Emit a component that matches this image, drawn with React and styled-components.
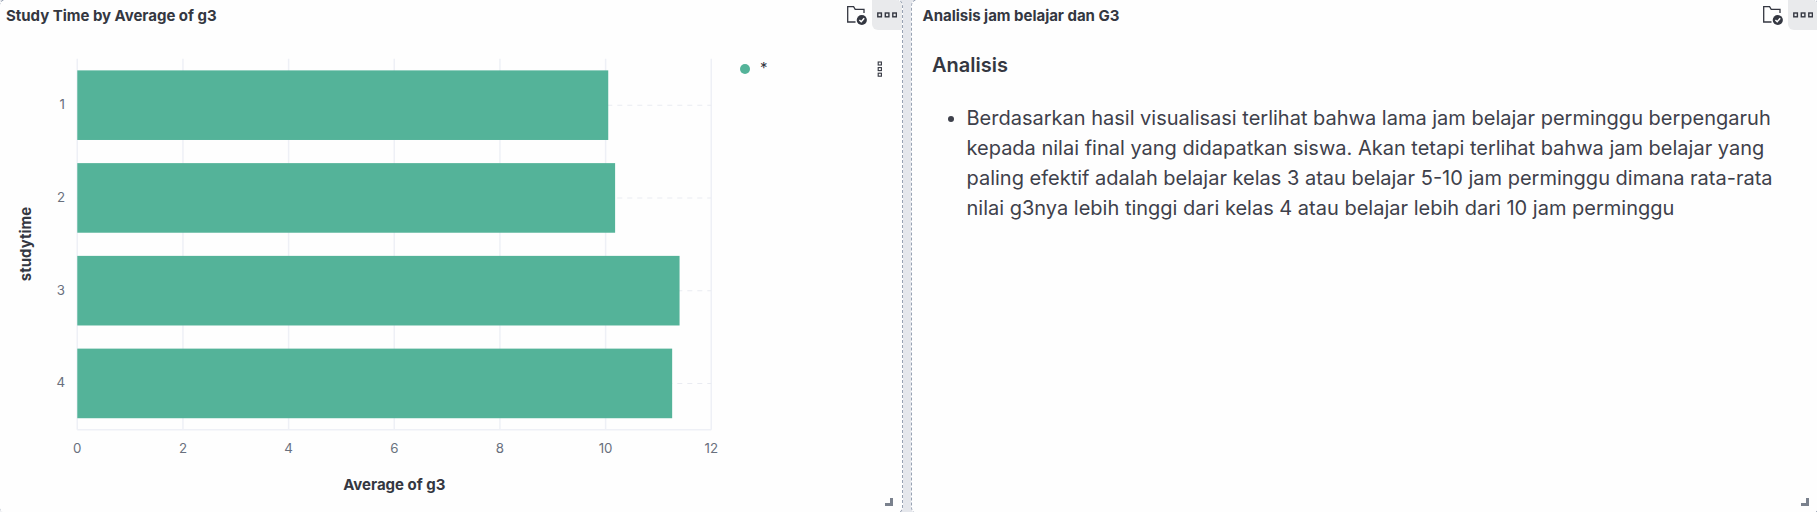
import React from "react";
import styled, { createGlobalStyle } from "styled-components";

const GlobalStyle = createGlobalStyle`
  * { box-sizing: border-box; }
  body { margin: 0; background: #e5e7ec; overflow: hidden; }
`;

const Dashboard = styled.main`
  display: grid;
  grid-template-columns: 904px 908px;
  column-gap: 8px;
  width: 1820px;
  height: 515px;
  margin: -1px 0 0 -1px;
  font-family: Inter, "Liberation Sans", sans-serif;
  color: #343741;
`;

const Panel = styled.section`
  position: relative;
  display: flex;
  flex-direction: column;
  min-width: 0;
  background: #fefefe;
  border: 1px dashed #98a2b3;
  border-radius: 7px;
  overflow: hidden;
`;

const Header = styled.header`
  display: flex;
  align-items: center;
  height: 30px;
  flex: none;
  padding-left: ${(p) => p.$inset}px;
`;

const Title = styled.h2`
  flex: 1;
  margin: 0;
  font-size: 15px;
  line-height: 31px;
  font-weight: 700;
  letter-spacing: -0.02px;
  padding-top: 1px;
`;

const LibraryBadge = styled.span`
  display: flex;
  width: 26px;
  height: 30px;
  padding-top: 4px;
`;

const MenuButton = styled.button`
  display: flex;
  align-items: center;
  justify-content: center;
  width: 30px;
  height: 30px;
  padding: 0;
  border: 0;
  border-bottom-left-radius: 6px;
  background: #e9eaec;
`;

const ChartBody = styled.div`
  display: flex;
  height: 482px;
`;

const Plot = styled.svg`
  display: block;
  flex: none;
`;

const AxisLabel = styled.text`
  font-size: 13.3px;
  fill: #69707d;
  text-anchor: ${(p) => p.$anchor || "middle"};
`;

const AxisTitle = styled.text`
  font-size: 15px;
  font-weight: 700;
  fill: #343741;
  text-anchor: middle;
`;

const Legend = styled.div`
  display: flex;
  align-items: flex-start;
  flex: 1;
  padding: 28px 19px 0 0;
`;

const LegendDot = styled.span`
  width: 10px;
  height: 10px;
  margin-top: 6px;
  border-radius: 50%;
  background: #54b399;
`;

const LegendText = styled.span`
  flex: 1;
  margin-left: 10px;
  font-size: 15px;
  line-height: 20px;
`;

const LegendMenu = styled.span`
  display: flex;
  margin-top: 3px;
`;

const Markdown = styled.div`
  padding: 20px 20px 0;
`;

const Heading = styled.h3`
  margin: 0;
  font-size: 20px;
  line-height: 30px;
  font-weight: 600;
`;

const List = styled.ul`
  width: 865px;
  margin: 23px 0 0;
  padding: 0 0 0 34.5px;
  font-size: 20px;
  line-height: 30px;
  color: #3e414b;
`;

const ResizeHandle = styled.span`
  position: absolute;
  right: 9px;
  bottom: 7px;
  width: 8px;
  height: 8px;
  border: solid #7a818d;
  border-width: 0 3px 3px 0;
`;

const FolderCheck = () => (
  <svg width="22" height="22" viewBox="0 0 22 22" fill="none">
    <path d="M9.5 18H1.7V2.7H7.6L9.2 5.3H18V9" stroke="#343741" strokeWidth="1.3" />
    <circle cx="15.8" cy="16" r="5.1" fill="#343741" />
    <path d="M13.4 16L15.2 17.7L18.2 14.2" stroke="#fefefe" strokeWidth="1.5" />
  </svg>
);

const Boxes = ({ vertical }) => (
  <svg width={vertical ? 6 : 20} height={vertical ? 17 : 6} fill="none" stroke="#343741" strokeWidth={vertical ? 1.1 : 1.4}>
    {[0, 1, 2].map((i) =>
      vertical ? (
        <rect key={i} x="1.2" y={1 + i * 5.6} width="3.2" height="3" />
      ) : (
        <rect key={i} x={0.8 + i * 7.5} y="1" width="3.6" height="3.8" />
      )
    )}
  </svg>
);

const LEFT = 77.3;
const TOP = 28.8;
const UNIT = 52.83;
const BAND = 92.75;
const BOTTOM = TOP + BAND * 4;
const RIGHT = LEFT + UNIT * 12;

const data = [
  { studytime: 1, average: 10.05 },
  { studytime: 2, average: 10.18 },
  { studytime: 3, average: 11.4 },
  { studytime: 4, average: 11.26 },
];

const BarChart = () => (
  <Plot width="740" height="482">
    {[0, 2, 4, 6, 8, 10, 12].map((t) => (
      <g key={t}>
        <line x1={LEFT + t * UNIT} x2={LEFT + t * UNIT} y1={TOP} y2={BOTTOM} stroke="#eef0f6" strokeWidth="1.5" />
        <AxisLabel x={LEFT + t * UNIT} y="423">{t}</AxisLabel>
      </g>
    ))}
    <line x1={LEFT} x2={RIGHT} y1={BOTTOM} y2={BOTTOM} stroke="#eef0f6" strokeWidth="1.5" />
    {data.map((d, i) => {
      const mid = TOP + BAND * (i + 0.5);
      return (
        <g key={d.studytime}>
          <line x1={LEFT} x2={RIGHT} y1={mid} y2={mid} stroke="#e9ebf1" strokeWidth="1.1" strokeDasharray="5 5" />
          <rect x={LEFT} y={mid - 34.8} width={d.average * UNIT} height="69.6" fill="#54b399" />
          <AxisLabel x="65" y={mid + 4} $anchor="end">{d.studytime}</AxisLabel>
        </g>
      );
    })}
    <AxisTitle x="394.3" y="460">Average of g3</AxisTitle>
    <AxisTitle transform="translate(31 214) rotate(-90)">studytime</AxisTitle>
  </Plot>
);

export default function App() {
  return (
    <>
      <GlobalStyle />
      <Dashboard>
        <Panel>
          <Header $inset={6}>
            <Title>Study Time by Average of g3</Title>
            <LibraryBadge><FolderCheck /></LibraryBadge>
            <MenuButton aria-label="Panel options"><Boxes /></MenuButton>
          </Header>
          <ChartBody>
            <BarChart />
            <Legend>
              <LegendDot />
              <LegendText>*</LegendText>
              <LegendMenu><Boxes vertical /></LegendMenu>
            </Legend>
          </ChartBody>
          <ResizeHandle />
        </Panel>
        <Panel>
          <Header $inset={10.5}>
            <Title>Analisis jam belajar dan G3</Title>
            <LibraryBadge><FolderCheck /></LibraryBadge>
            <MenuButton aria-label="Panel options"><Boxes /></MenuButton>
          </Header>
          <Markdown>
            <Heading>Analisis</Heading>
            <List>
              <li>
                Berdasarkan hasil visualisasi terlihat bahwa lama jam belajar perminggu berpengaruh
                kepada nilai final yang didapatkan siswa. Akan tetapi terlihat bahwa jam belajar yang
                paling efektif adalah belajar kelas 3 atau belajar 5-10 jam perminggu dimana rata-rata
                nilai g3nya lebih tinggi dari kelas 4 atau belajar lebih dari 10 jam perminggu
              </li>
            </List>
          </Markdown>
          <ResizeHandle />
        </Panel>
      </Dashboard>
    </>
  );
}
